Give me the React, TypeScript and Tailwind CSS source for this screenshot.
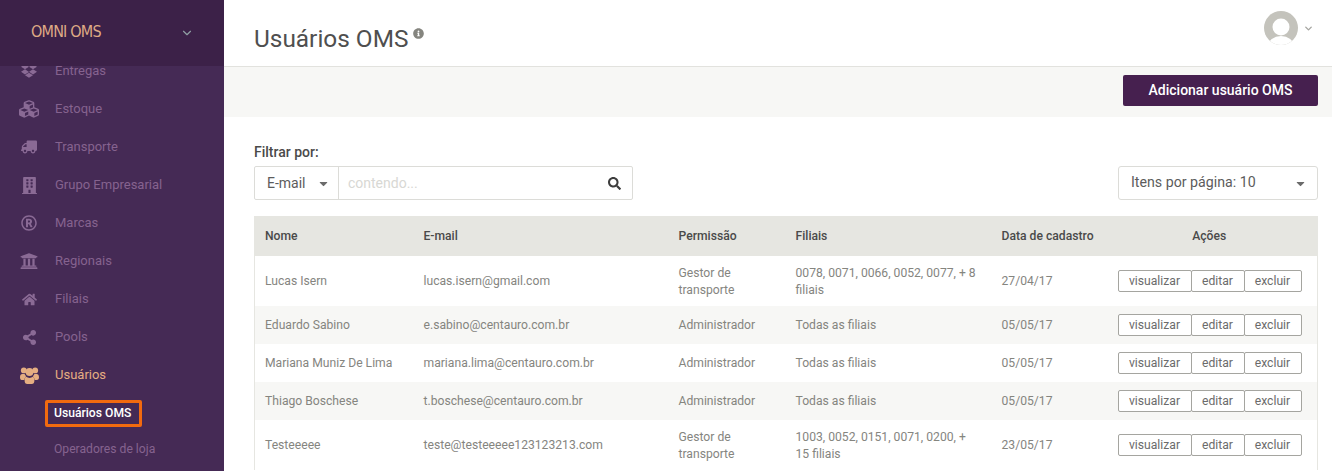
import { ChevronDown } from 'lucide-react';
import {
    FaBuilding,
    FaCaretDown,
    FaCubes,
    FaDropbox,
    FaHome,
    FaInfoCircle,
    FaRegRegistered,
    FaSearch,
    FaShareAlt,
    FaTruck,
    FaUniversity,
} from 'react-icons/fa';

const NAV_ITEMS = [
    { label: 'Entregas', icon: FaDropbox, size: 16, flip: false },
    { label: 'Estoque', icon: FaCubes, size: 20, flip: false },
    { label: 'Transporte', icon: FaTruck, size: 16, flip: true },
    { label: 'Grupo Empresarial', icon: FaBuilding, size: 17, flip: false },
    { label: 'Marcas', icon: FaRegRegistered, size: 16, flip: false },
    { label: 'Regionais', icon: FaUniversity, size: 18, flip: false },
    { label: 'Filiais', icon: FaHome, size: 15, flip: false },
    { label: 'Pools', icon: FaShareAlt, size: 15, flip: false },
];

const ROWS = [
    {
        name: 'Lucas Isern',
        email: 'lucas.isern@gmail.com',
        role: 'Gestor de transporte',
        branches: '0078, 0071, 0066, 0052, 0077, + 8 filiais',
        date: '27/04/17',
        tall: true,
    },
    {
        name: 'Eduardo Sabino',
        email: 'e.sabino@centauro.com.br',
        role: 'Administrador',
        branches: 'Todas as filiais',
        date: '05/05/17',
    },
    {
        name: 'Mariana Muniz De Lima',
        email: 'mariana.lima@centauro.com.br',
        role: 'Administrador',
        branches: 'Todas as filiais',
        date: '05/05/17',
    },
    {
        name: 'Thiago Boschese',
        email: 't.boschese@centauro.com.br',
        role: 'Administrador',
        branches: 'Todas as filiais',
        date: '05/05/17',
    },
    {
        name: 'Testeeeee',
        email: 'teste@testeeeee123123213.com',
        role: 'Gestor de transporte',
        branches: '1003, 0052, 0151, 0071, 0200, + 15 filiais',
        date: '23/05/17',
        tall: true,
    },
];

const UsersIcon = () => (
    <svg width="19" height="17" viewBox="0 0 19 17" fill="currentColor">
        <circle cx="3.8" cy="3.4" r="2.9" />
        <circle cx="15.2" cy="3.4" r="2.9" />
        <circle cx="9.5" cy="5" r="3.9" />
        <path d="M0 10.2C0 8.2 1 7 2.4 7h2.2c.4 1 1 1.8 1.6 2.3-.9.8-1.6 2-1.8 3.6H1.6C.6 12.9 0 11.8 0 10.2z" />
        <path d="M19 10.2C19 8.2 18 7 16.6 7h-2.2c-.4 1-1 1.8-1.6 2.3.9.8 1.6 2 1.8 3.6h2C18.4 12.9 19 11.8 19 10.2z" />
        <path d="M6.2 9.8c.9.7 2 1.1 3.3 1.1s2.4-.4 3.3-1.1c.8.2 1.6 1.3 1.6 3.6 0 2.2-1 3.6-2.7 3.6H7.3c-1.7 0-2.7-1.4-2.7-3.6 0-2.3.8-3.4 1.6-3.6z" />
    </svg>
);

const ActionButton = ({ label, width }: { label: string; width: string }) => (
    <button className={`${width} h-[22px] -ml-px first:ml-0 bg-white border border-[#a5a5a0] rounded-[2px] text-[12.15px] leading-none text-[#6b6b6b]`}>
        {label}
    </button>
);

const Sidebar = () => (
    <aside className="w-[224px] shrink-0 h-full bg-[#452a55] flex flex-col overflow-hidden">
        <div className="h-[66px] shrink-0 bg-[#3c2148] flex items-center justify-between pl-[31px] pr-[30px] relative z-10">
            <span className="pb-[3px] font-['DejaVu_Sans',sans-serif] [font-stretch:condensed] text-[16px] tracking-[-0.8px] text-[#dfaa85]">OMNI OMS</span>
            <ChevronDown size={14} className="text-[#8f9fa3]" />
        </div>
        <nav className="-mt-[14px] flex flex-col">
            {NAV_ITEMS.map(({ label, icon: Icon, size, flip }) => (
                <div key={label} className="h-[38px] shrink-0 flex items-center">
                    <span className="w-[55px] pl-[6px] pr-[3px] flex justify-center text-[#8a6a95]">
                        <Icon size={size} className={flip ? '-scale-x-100' : ''} />
                    </span>
                    <span className="text-[13px] text-[#85638f]">{label}</span>
                </div>
            ))}
            <div className="h-[38px] shrink-0 flex items-center">
                <span className="w-[55px] pl-[6px] pr-[3px] flex justify-center text-[#e5ae82]">
                    <UsersIcon />
                </span>
                <span className="text-[13px] text-[#e5ae82]">Usuários</span>
            </div>
            <div className="h-[38px] shrink-0 flex items-center pl-[45px]">
                <span className="w-[97px] h-[27px] flex items-center pl-[6px] border-[3px] border-[#f26a0f] rounded-[2px] text-[12.15px] font-medium text-white">
                    Usuários OMS
                </span>
            </div>
            <div className="h-[34px] shrink-0 flex items-center pl-[54px] text-[12.15px] text-[#85638f]">Operadores de loja</div>
        </nav>
    </aside>
);

const Table = () => (
    <table className="w-full table-fixed border-collapse border-x border-[#e6e6e1] text-[12.15px]">
        <colgroup>
            <col className="w-[159px]" />
            <col className="w-[255px]" />
            <col className="w-[117px]" />
            <col className="w-[206px]" />
            <col className="w-[106px]" />
            <col />
        </colgroup>
        <thead>
            <tr className="h-[40px] bg-[#e6e6e1] text-[#4a4a4a]">
                <th className="pl-[10px] text-left font-medium">Nome</th>
                <th className="pl-[10px] text-left font-medium">E-mail</th>
                <th className="pl-[10px] text-left font-medium">Permissão</th>
                <th className="pl-[10px] text-left font-medium">Filiais</th>
                <th className="pl-[10px] text-left font-medium">Data de cadastro</th>
                <th className="pl-[4px] text-center font-medium">Ações</th>
            </tr>
        </thead>
        <tbody>
            {ROWS.map((row) => (
                <tr key={row.email} className={`${row.tall ? 'h-[50px]' : 'h-[38px]'} even:bg-[#f7f7f5] text-[#85857f]`}>
                    <td className="pl-[10px]">{row.name}</td>
                    <td className="pl-[10px]">{row.email}</td>
                    <td className={`pl-[10px] pr-[10px] leading-[17px] ${row.tall ? 'pt-[2px]' : ''}`}>{row.role}</td>
                    <td className={`pl-[10px] pr-[13px] leading-[17px] ${row.tall ? 'pt-[2px]' : ''}`}>{row.branches}</td>
                    <td className="pl-[10px]">{row.date}</td>
                    <td>
                        <div className="flex pl-[20px]">
                            <ActionButton label="visualizar" width="w-[74px]" />
                            <ActionButton label="editar" width="w-[54px]" />
                            <ActionButton label="excluir" width="w-[58px]" />
                        </div>
                    </td>
                </tr>
            ))}
        </tbody>
    </table>
);

export default function App() {
    return (
        <div className="w-[1332px] h-[471px] flex overflow-hidden bg-white font-['Roboto',sans-serif]">
            <Sidebar />
            <main className="flex-1 min-w-0 flex flex-col">
                <header className="h-[67px] shrink-0 border-b border-[#e2e2de] flex items-start justify-between pl-[30px] pr-[18px]">
                    <div className="flex items-start pt-[23px]">
                        <h1 className="text-[24.4px] leading-[32px] text-[#4f4f4f]">Usuários OMS</h1>
                        <FaInfoCircle size={11} className="ml-[5px] mt-[5px] text-[#85857f]" />
                    </div>
                    <div className="flex items-center pt-[11px]">
                        <svg width="34" height="34" viewBox="0 0 34 34">
                            <clipPath id="avatar">
                                <circle cx="17" cy="17" r="17" />
                            </clipPath>
                            <g clipPath="url(#avatar)">
                                <rect width="34" height="34" fill="#c4c3bc" />
                                <circle cx="17" cy="16" r="8.5" fill="#fff" />
                                <ellipse cx="17" cy="35" rx="13" ry="10" fill="#fff" />
                            </g>
                        </svg>
                        <ChevronDown size={11} strokeWidth={3} className="ml-[5px] text-[#a5a5a0]" />
                    </div>
                </header>
                <div className="h-[50px] shrink-0 bg-[#f7f7f5] flex items-start justify-end pr-[14px] pt-[8px]">
                    <button className="w-[195px] h-[31px] bg-[#46204f] rounded-[2px] text-[14px] font-medium text-white">
                        Adicionar usuário OMS
                    </button>
                </div>
                <section className="flex-1 pl-[30px] pr-[14px] pt-[27px]">
                    <div className="text-[14px] leading-[16px] font-medium text-[#4a4a4a]">Filtrar por:</div>
                    <div className="mt-[6px] flex items-center justify-between">
                        <div className="w-[379px] h-[34px] flex border border-[#dcdcd8] rounded-[2px] text-[14px]">
                            <div className="w-[84px] shrink-0 flex items-center justify-between pl-[12px] pr-[8px] border-r border-[#dcdcd8] text-[#5c5c5c]">
                                E-mail
                                <FaCaretDown size={13} className="text-[#6b6b6b]" />
                            </div>
                            <div className="flex-1 flex items-center justify-between pl-[9px] pr-[11px]">
                                <span className="text-[#d8d8d4]">contendo...</span>
                                <FaSearch size={13} className="text-[#3d3d3d]" />
                            </div>
                        </div>
                        <div className="w-[200px] h-[34px] flex items-center justify-between pl-[12px] pr-[10px] border border-[#dcdcd8] rounded-[3px] text-[14.2px] text-[#5c5c5c]">
                            Itens por página: 10
                            <FaCaretDown size={13} className="text-[#6b6b6b]" />
                        </div>
                    </div>
                    <div className="mt-[16px]">
                        <Table />
                    </div>
                </section>
            </main>
        </div>
    );
}
